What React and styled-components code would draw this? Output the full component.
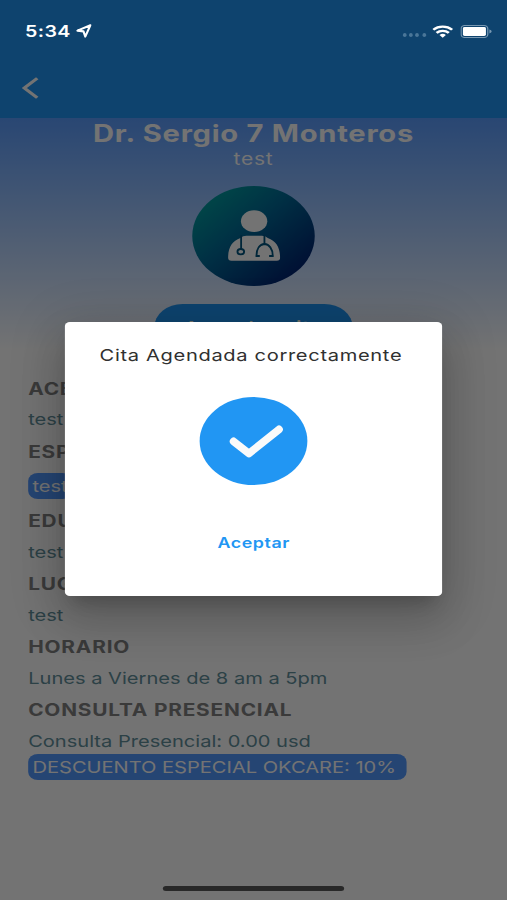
import React, { useState } from 'react';
import styled, { createGlobalStyle } from 'styled-components';

const SCREEN = 414;
const STRETCH = 507 / SCREEN;

const GlobalStyle = createGlobalStyle`
    * {
        box-sizing: border-box;
        margin: 0;
        padding: 0;
    }

    body {
        overflow: hidden;
        font-family: Inter, "Liberation Sans", sans-serif;
    }
`

const Screen = styled.div`
    position: relative;
    width: ${SCREEN}px;
    height: 900px;
    overflow: hidden;
    background-color: #FFFFFF;
    display: flex;
    flex-direction: column;
    transform: scaleX(${STRETCH});
    transform-origin: 0 0;
`

const Header = styled.header`
    height: 118px;
    background-color: #2196F3;
    display: flex;
    flex-direction: column;
`

const StatusBar = styled.div`
    position: relative;
    z-index: 2;
    height: 62px;
    padding: 0 12.5px 0 20.5px;
    display: flex;
    align-items: center;
    justify-content: space-between;
    color: #FFFFFF;
`

const StatusGroup = styled.div`
    display: flex;
    align-items: center;
    gap: ${props => props.gap || 0}px;
`

const Time = styled.span`
    font-size: 16px;
    font-weight: 600;
    letter-spacing: 0.3px;
`

const Dots = styled.div`
    display: flex;
    gap: 2.2px;
    padding-top: 8px;

    i {
        width: 3px;
        height: 3.6px;
        border-radius: 50%;
        background-color: #4A7698;
    }
`

const BackButton = styled.button`
    width: 52px;
    height: 51px;
    padding-left: 18px;
    border: none;
    background: none;
    display: flex;
    align-items: center;
    cursor: pointer;
`

const Profile = styled.section`
    height: 232px;
    background: linear-gradient(#5B9DFF, #FFFFFF);
    display: flex;
    flex-direction: column;
    align-items: center;
`

const Name = styled.h1`
    font-size: 23.8px;
    font-weight: 700;
    line-height: 31px;
    letter-spacing: 0.6px;
    color: #FFFFFF;
`

const Specialty = styled.p`
    font-size: 17.2px;
    line-height: 20px;
    letter-spacing: 0.6px;
    color: #FFFFFF;
`

const Avatar = styled.div`
    width: 100px;
    height: 100px;
    margin: 16.5px 0 18.5px;
    border-radius: 50%;
    background: linear-gradient(135deg, #00A3A0 8%, #006C98 42%, #002070 88%);
    display: flex;
    align-items: center;
    justify-content: center;
`

const BookButton = styled.button`
    width: 162px;
    height: 46px;
    flex-shrink: 0;
    padding-top: 1px;
    border: none;
    border-radius: 23px;
    background-color: #2196F3;
    color: #FBFFE4;
    font-family: inherit;
    font-size: 17.5px;
    font-weight: 500;
    letter-spacing: 0.6px;
    cursor: pointer;
`

const Info = styled.section`
    padding: 22.5px 23px 0;
`

const Label = styled.h2`
    height: 31.5px;
    font-size: 17px;
    font-weight: 700;
    line-height: 32.5px;
    letter-spacing: 0.65px;
    color: #828282;
`

const Value = styled.p`
    height: 31.5px;
    font-size: 16.4px;
    line-height: 31px;
    color: #62909C;
`

const Tag = styled.span`
    display: block;
    width: fit-content;
    height: 26px;
    margin: ${props => props.tight ? '-3px 0 0' : '6px 0'};
    padding: 0 ${props => props.tight ? 9 : 4}px 0 3.5px;
    border-radius: 8px;
    background-color: #5399FF;
    font-size: 16.4px;
    line-height: 26px;
    color: #FFFFFF;
`

const HomeIndicator = styled.div`
    position: absolute;
    z-index: 2;
    bottom: 9px;
    left: 50%;
    width: 148px;
    height: 5.5px;
    border-radius: 3px;
    background-color: #282828;
    transform: translate(-50%, 0);
`

const Overlay = styled.div`
    position: absolute;
    inset: 0;
    padding: 18px 0 0 0.3px;
    background-color: rgba(0, 0, 0, 0.55);
    display: flex;
    align-items: center;
    justify-content: center;
`

const Dialog = styled.div`
    width: 308.5px;
    height: 274px;
    padding-top: 20px;
    border-radius: 4px;
    background-color: #FFFFFF;
    box-shadow: 0 11px 15px -7px rgba(0, 0, 0, 0.2),
        0 24px 38px 3px rgba(0, 0, 0, 0.14),
        0 9px 46px 8px rgba(0, 0, 0, 0.12);
    display: flex;
    flex-direction: column;
    align-items: center;
`

const DialogTitle = styled.h3`
    margin-right: 4.5px;
    font-size: 16.4px;
    font-weight: 400;
    line-height: 27px;
    letter-spacing: 0.55px;
    color: #303030;
`

const Success = styled.div`
    width: 88.5px;
    height: 88.5px;
    margin: 27.5px 0 40px;
    border-radius: 50%;
    background-color: #2196F3;
`

const AcceptButton = styled.button`
    height: 36px;
    padding: 0 16px;
    border: none;
    background: none;
    font-family: inherit;
    font-size: 14.6px;
    font-weight: 600;
    letter-spacing: 0.45px;
    color: #2196F3;
    cursor: pointer;
`

const LocationIcon = () => (
    <svg width="13" height="14" viewBox="0 0 16 14" preserveAspectRatio="none">
        <path d="M14.5 1.2 L1.5 6.6 L7.6 7.4 L9.4 12.6 Z" fill="none" stroke="#FFFFFF" strokeWidth="2.1" strokeLinejoin="round"/>
    </svg>
)

const WifiIcon = () => (
    <svg width="17" height="13" viewBox="0 0 17 13">
        <g fill="none" stroke="#FFFFFF" strokeWidth="2.3">
            <path d="M0.8 4.8 A11 11 0 0 1 16.2 4.8"/>
            <path d="M3.5 7.9 A7.2 7.2 0 0 1 13.5 7.9"/>
        </g>
        <path d="M5.9 10 A3.8 3.8 0 0 1 11.1 10 L8.5 12.7 Z" fill="#FFFFFF"/>
    </svg>
)

const BatteryIcon = () => (
    <svg width="26" height="13" viewBox="0 0 26 13">
        <rect x="0.5" y="0.5" width="21.8" height="12" rx="3" fill="none" stroke="#7898B2"/>
        <rect x="2" y="2" width="18.8" height="9" rx="1.4" fill="#FFFFFF"/>
        <path d="M23.6 4.6 Q25.5 5.3 25.5 6.5 Q25.5 7.7 23.6 8.4 Z" fill="#7898B2"/>
    </svg>
)

const BackIcon = () => (
    <svg width="14" height="24" viewBox="0 0 14 24">
        <path d="M12.4 2.2 L1.9 12 L12.4 21.8" fill="none" stroke="#FFFFFF" strokeWidth="2.9"/>
    </svg>
)

const DoctorIcon = () => (
    <svg width="43" height="51" viewBox="143 106 158 153" preserveAspectRatio="none">
        <g fill="#FFFFFF">
            <ellipse cx="222" cy="139.5" rx="39.5" ry="32.5"/>
            <path d="M144 249 C144 218 156 199 181 190 Q188 183 199 183 H245 Q256 183 263 190 C288 199 300 218 300 249 Q300 258 290 258 H154 Q144 258 144 249 Z"/>
        </g>
        <g fill="none" stroke="#00557F" strokeWidth="5.5" strokeLinecap="round">
            <path d="M183 184 V222"/>
            <ellipse cx="182" cy="231" rx="10" ry="8"/>
            <path d="M253 184 V208"/>
            <path d="M237 244 H229 C229 222 239 209 253 208 C267 209 278 222 278 244 H269"/>
        </g>
    </svg>
)

const CheckIcon = () => (
    <svg width="88.5" height="88.5" viewBox="60 35 325 265" preserveAspectRatio="none">
        <path d="M162 168 L208 204 L298 132" fill="none" stroke="#FAFAFA" strokeWidth="23" strokeLinecap="round" strokeLinejoin="round"/>
    </svg>
)

const App = () => {
    const [open, setOpen] = useState(true);

    return (
        <>
            <GlobalStyle />
            <Screen>
                <Header>
                    <StatusBar>
                        <StatusGroup gap={4}>
                            <Time>5:34</Time>
                            <LocationIcon />
                        </StatusGroup>
                        <StatusGroup gap={5.5}>
                            <Dots><i /><i /><i /><i /></Dots>
                            <WifiIcon />
                            <BatteryIcon />
                        </StatusGroup>
                    </StatusBar>
                    <BackButton aria-label="Regresar"><BackIcon /></BackButton>
                </Header>
                <Profile>
                    <Name>Dr. Sergio 7 Monteros</Name>
                    <Specialty>test</Specialty>
                    <Avatar><DoctorIcon /></Avatar>
                    <BookButton onClick={() => setOpen(true)}>Agendar cita</BookButton>
                </Profile>
                <Info>
                    <Label>ACERCA DE</Label>
                    <Value>test</Value>
                    <Label>ESPECIALIDAD</Label>
                    <Tag>test</Tag>
                    <Label>EDUCACIÓN</Label>
                    <Value>test</Value>
                    <Label>LUGAR</Label>
                    <Value>test</Value>
                    <Label>HORARIO</Label>
                    <Value>Lunes a Viernes de 8 am a 5pm</Value>
                    <Label>CONSULTA PRESENCIAL</Label>
                    <Value>Consulta Presencial: 0.00 usd</Value>
                    <Tag tight={1}>DESCUENTO ESPECIAL OKCARE: 10%</Tag>
                </Info>
                { open && (
                    <Overlay>
                        <Dialog role="dialog">
                            <DialogTitle>Cita Agendada correctamente</DialogTitle>
                            <Success><CheckIcon /></Success>
                            <AcceptButton onClick={() => setOpen(false)}>Aceptar</AcceptButton>
                        </Dialog>
                    </Overlay>
                ) }
                <HomeIndicator />
            </Screen>
        </>
    )
}

export default App
